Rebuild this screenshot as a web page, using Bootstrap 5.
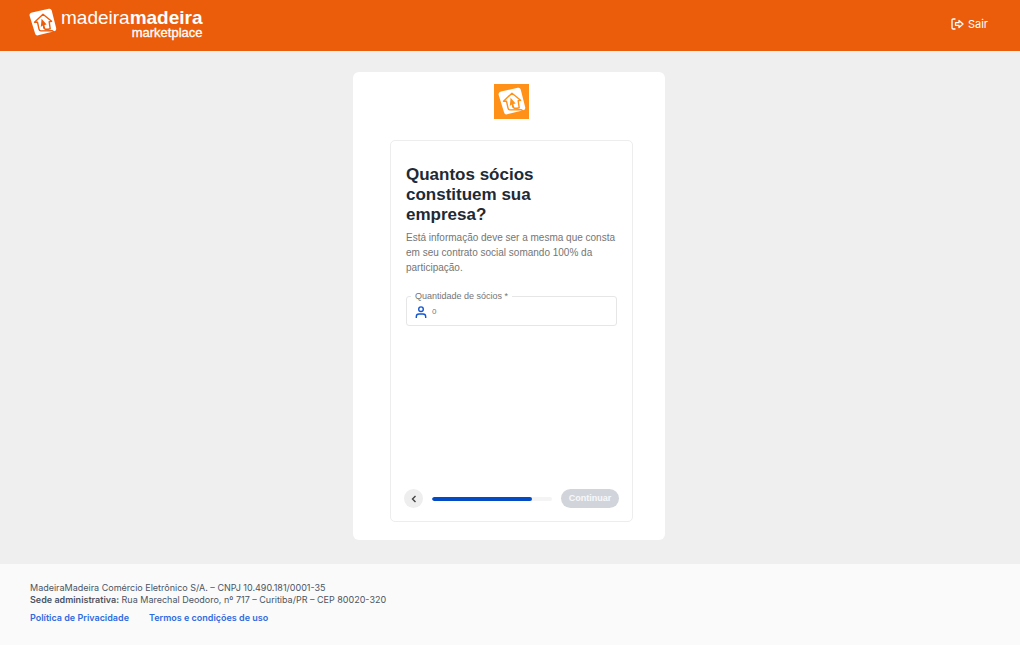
<!DOCTYPE html>
<html lang="pt-BR">
<head>
<meta charset="utf-8">
<meta name="viewport" content="width=device-width, initial-scale=1">
<title>MadeiraMadeira Marketplace</title>
<link href="https://cdn.jsdelivr.net/npm/bootstrap@5.3.0/dist/css/bootstrap.min.css" rel="stylesheet">
<style>
body { background: #efefef; font-family: "Liberation Sans", Arial, sans-serif; }
.topbar { background: #eb5d0b; padding: 8px 32px 12px 29px; }
.brand-icon { width: 28px; height: 28px; }
.brand-name { font-size: 19px; line-height: 19px; }
.brand-sub { font-size: 13px; line-height: 12px; -webkit-text-stroke: .3px #fff; }
.exit-link { font: 11px/16px Inter, sans-serif; gap: 4px; }
main { padding: 21px 2px 24px 0; }
.signup { width: 312px; border-radius: 6px; padding: 12px 32px 18px 37px; }
.signup-logo { width: 35px; height: 35px; margin-bottom: 21px; }
.step { border: 1px solid #ededed; border-radius: 5px; min-height: 382px; padding: 24px 13px 13px; }
.step-content { padding: 0 2px; }
.step h1 { font-size: 17px; line-height: 20px; font-weight: 700; color: #212936; margin-bottom: 5px; }
.step p { font-size: 10px; line-height: 15px; color: #757575; margin-bottom: 16px; }
.field { border: 1px solid #e6e6e6; border-radius: 3px; padding: 0 8px 7px; min-width: 0; }
.field legend { float: none; width: auto; font-size: 9px; line-height: 11px; color: #757575; padding: 0 4px; margin: 0 0 4px -4px; }
.field input { font-size: 8px; line-height: 12px; color: #757575; min-height: 0; margin-left: 5px; }
.field input::placeholder { color: #757575; }
.back { width: 19px; height: 19px; background: #eee; }
.progress { height: 4px; background: #f4f4f4; margin: 0 9px; border-radius: 3px; }
.progress-bar { background: #034bc5; border-radius: 3px; }
.continue { font-size: 9px; line-height: 19px; font-weight: 700; width: 58px; }
.continue:disabled { background: #d1d5db; color: #f7f8fa; opacity: 1; }
.site-footer { background: #fafafa; font: 9px/12px Inter, sans-serif; color: #4b5563; padding: 18px 30px 21px; }
.site-footer strong { font-weight: 600; }
.site-footer nav { margin-top: 6px; gap: 20px; }
.site-footer a { color: #2f6be0; font-weight: 600; }
</style>
</head>
<body class="d-flex flex-column min-vh-100">
<svg class="d-none" aria-hidden="true">
  <symbol id="house" viewBox="0 0 28 28">
    <path fill="#fff" d="M3 4.400 19.800.8q2.300-.5 2.900 1.700l4.500 17.700q.5 2.400-1.800 3L9.100 27.300q-2.400.5-3-1.800L.6 7.800Q0 5.200 3 4.400Z"/>
    <g fill="none" stroke="currentColor" stroke-width="1.400" stroke-linejoin="round" stroke-linecap="round">
      <path d="M8.500 14.200H5.500L14 6.200l8.600 7-2.400.6 1 7-2 .4h-3l-1.500-1.600M8.500 14.200l1.500 7q.4 1.800 2 1.700l11-.3 2 1.200"/>
    </g>
    <path fill="currentColor" d="m12.600 10.700 5 5.800-2.200.4.800 3.400-1.600.4-1-3.300-1.800 1.700Z"/>
  </symbol>
</svg>

<header class="topbar text-white d-flex align-items-center justify-content-between">
  <a href="#" class="d-flex text-white text-decoration-none align-items-start" aria-label="MadeiraMadeira Marketplace">
    <svg class="brand-icon" style="color:#eb5d0b"><use href="#house"/></svg>
    <span class="d-flex flex-column text-end ms-1">
      <span class="brand-name">madeira<b>madeira</b></span>
      <span class="brand-sub">marketplace</span>
    </span>
  </a>
  <a href="#" class="exit-link d-flex align-items-center text-white text-decoration-none">
    <svg width="13" height="12" viewBox="0 0 13 12" fill="none" stroke="#fff" stroke-width="1.300" stroke-linejoin="round" stroke-linecap="round"><path d="M4 1H2.300Q1 1 1 2.300v7.400Q1 11 2.300 11H4M4.500 4.700H8V2.500L12 6 8 9.500V7.300H4.500Z"/></svg>
    Sair
  </a>
</header>

<main class="flex-grow-1">
  <section class="signup bg-white mx-auto">
    <div class="text-center lh-1">
      <svg class="signup-logo" viewBox="0 0 35 35" style="color:#ff9118"><path fill="currentColor" d="M0 0h35v35H0z"/><use href="#house" x="4" y="3" width="28" height="28"/></svg>
    </div>
    <form class="step d-flex flex-column">
      <div class="step-content">
        <h1 class="pe-5">Quantos sócios constituem sua empresa?</h1>
        <p>Está informação deve ser a mesma que consta em seu contrato social somando 100% da participação.</p>
        <fieldset class="field">
          <legend><label for="socios">Quantidade de sócios *</label></legend>
          <div class="d-flex align-items-center">
            <svg class="flex-shrink-0" width="12" height="12" viewBox="0 0 12 12" fill="none" stroke="#1557cf" stroke-width="1.400"><circle cx="6" cy="3.200" r="2.300"/><path d="M1.300 12v-1.300Q1.300 8 4 8h4Q10.700 8 10.700 10.700V12"/></svg>
            <input id="socios" type="text" inputmode="numeric" class="form-control border-0 shadow-none bg-transparent p-0" placeholder="0">
          </div>
        </fieldset>
      </div>
      <div class="d-flex align-items-center mt-auto">
        <button type="button" class="back btn rounded-circle border-0 p-0 d-flex align-items-center justify-content-center" aria-label="Voltar">
          <svg width="6" height="8" viewBox="0 0 6 8" fill="none" stroke="#444" stroke-width="1.400"><path d="M4.500 1 1.500 4l3 3"/></svg>
        </button>
        <div class="progress flex-grow-1" role="progressbar" aria-label="Progresso" aria-valuenow="83" aria-valuemin="0" aria-valuemax="100"><div class="progress-bar" style="width:83%"></div></div>
        <button type="submit" class="continue btn rounded-pill border-0 p-0" disabled>Continuar</button>
      </div>
    </form>
  </section>
</main>

<footer class="site-footer">
  <div>MadeiraMadeira Comércio Eletrônico S/A. – CNPJ 10.490.181/0001-35</div>
  <div><strong>Sede administrativa:</strong> Rua Marechal Deodoro, nº 717 – Curitiba/PR – CEP 80020-320</div>
  <nav class="d-flex">
    <a href="#" class="text-decoration-none">Política de Privacidade</a>
    <a href="#" class="text-decoration-none">Termos e condições de uso</a>
  </nav>
</footer>
<script src="https://cdn.jsdelivr.net/npm/bootstrap@5.3.0/dist/js/bootstrap.bundle.min.js"></script>
</body>
</html>
